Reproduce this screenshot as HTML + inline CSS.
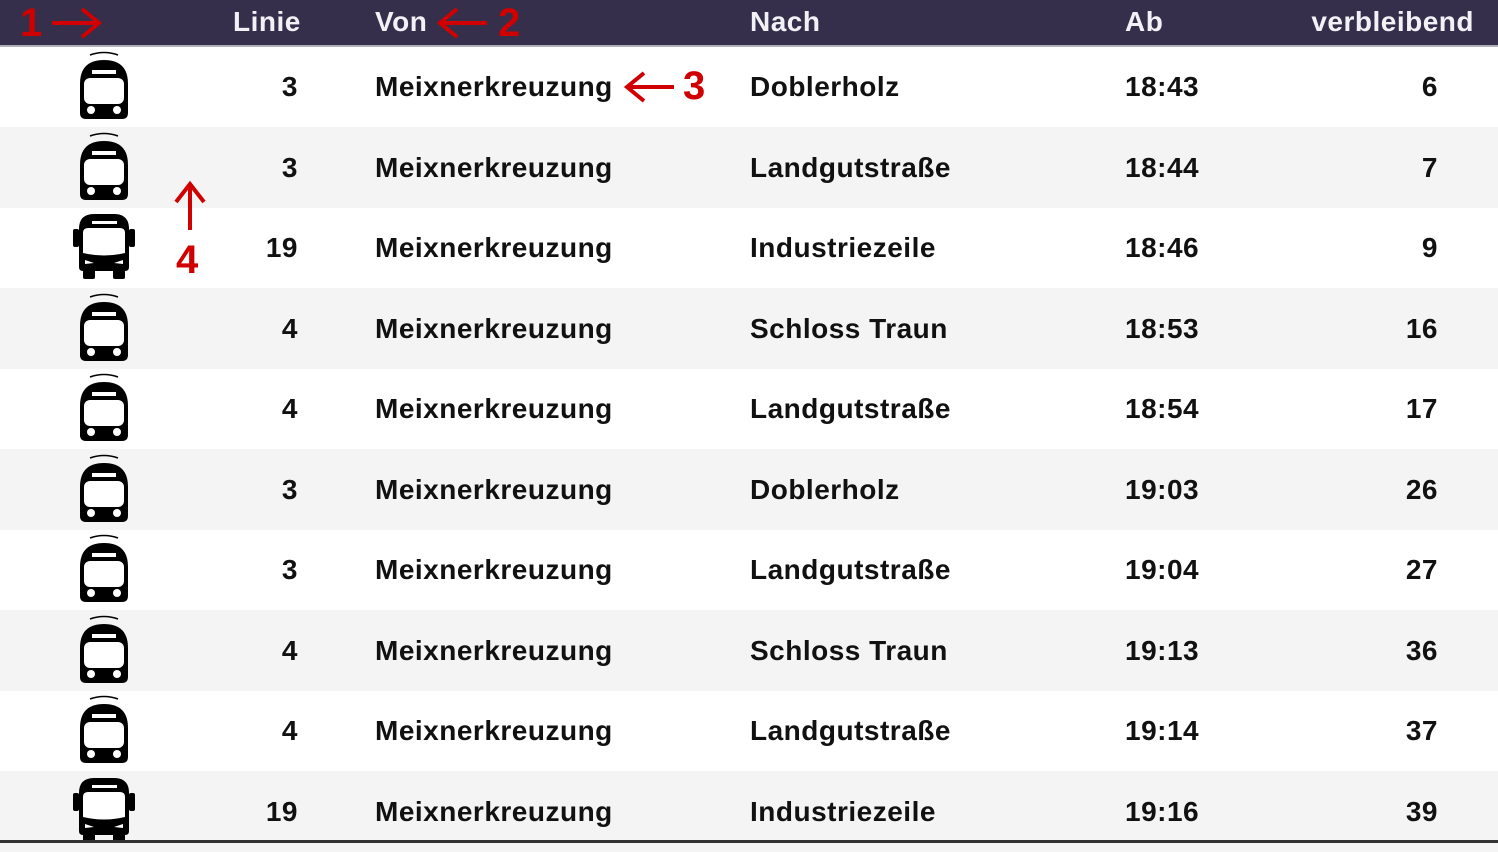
<!DOCTYPE html>
<html><head><meta charset="utf-8"><style>
body{margin:0;width:1498px;height:843px;overflow:hidden;background:#fff;font-family:"Liberation Sans",sans-serif;font-weight:bold;position:relative}
.hd{position:absolute;left:0;top:0;width:1498px;height:47px;background:#352f4b;border-bottom:2px solid #b0aeb8;box-sizing:border-box}
.h{position:absolute;top:5px;color:#f2f1f6;font-size:28px;letter-spacing:0.5px;line-height:34px}
.row{position:absolute;left:0;width:1498px;height:81px}
.e{background:#f4f4f4}
.t{position:absolute;font-size:28px;letter-spacing:0.5px;line-height:30px;color:#111;top:26px}
.n{right:1200px;text-align:right}
.v{left:375px}.na{left:750px}.ab{left:1125px}.rm{right:60px;text-align:right}
.ic{position:absolute;left:72px;top:0}
.ann{position:absolute;color:#d00000;font-size:40px;font-weight:bold;line-height:40px}
</style></head><body>
<svg width="0" height="0" style="position:absolute">
<defs>
<g id="tram"><path d="M18 9 Q32 4 46 9" stroke="#000" stroke-width="1.5" fill="none"/><path d="M8 38 Q8 14 32 14 Q56 14 56 38 L56 67 Q56 73 50 73 L14 73 Q8 73 8 67Z" fill="#000"/><rect x="20" y="24" width="24" height="4" fill="#fff"/><rect x="12" y="32" width="40" height="26" rx="6" fill="#fff"/><circle cx="19" cy="64" r="4" fill="#fff"/><circle cx="45" cy="64" r="4" fill="#fff"/></g>
<g id="bus"><rect x="1" y="22" width="6" height="18" rx="2" fill="#000"/><rect x="57" y="22" width="6" height="18" rx="2" fill="#000"/><path d="M7 22 Q7 7 22 7 L42 7 Q57 7 57 22 L57 60 Q57 64 53 64 L11 64 Q7 64 7 60Z" fill="#000"/><rect x="11" y="62" width="12" height="10" rx="2" fill="#000"/><rect x="41" y="62" width="12" height="10" rx="2" fill="#000"/><rect x="20" y="14" width="25" height="3" fill="#fff"/><path d="M11 26 Q11 21 16 21 L48 21 Q53 21 53 26 L53 46 Q32 51 11 46Z" fill="#fff"/><path d="M13 53 L22 56 L13 57Z" fill="#fff"/><path d="M51 53 L42 56 L51 57Z" fill="#fff"/></g>
</defs></svg>
<div class="hd"></div>
<div class="h" style="left:233px">Linie</div>
<div class="h" style="left:375px">Von</div>
<div class="h" style="left:750px">Nach</div>
<div class="h" style="left:1125px">Ab</div>
<div class="h" style="right:24px">verbleibend</div>

<div class="row" style="top:46px"><svg class="ic" width="64" height="81"><use href="#tram"/></svg><div class="t n">3</div><div class="t v">Meixnerkreuzung</div><div class="t na">Doblerholz</div><div class="t ab">18:43</div><div class="t rm">6</div></div>
<div class="row e" style="top:126.5px"><svg class="ic" width="64" height="81"><use href="#tram"/></svg><div class="t n">3</div><div class="t v">Meixnerkreuzung</div><div class="t na">Landgutstraße</div><div class="t ab">18:44</div><div class="t rm">7</div></div>
<div class="row" style="top:207px"><svg class="ic" width="64" height="81"><use href="#bus"/></svg><div class="t n">19</div><div class="t v">Meixnerkreuzung</div><div class="t na">Industriezeile</div><div class="t ab">18:46</div><div class="t rm">9</div></div>
<div class="row e" style="top:287.5px"><svg class="ic" width="64" height="81"><use href="#tram"/></svg><div class="t n">4</div><div class="t v">Meixnerkreuzung</div><div class="t na">Schloss Traun</div><div class="t ab">18:53</div><div class="t rm">16</div></div>
<div class="row" style="top:368px"><svg class="ic" width="64" height="81"><use href="#tram"/></svg><div class="t n">4</div><div class="t v">Meixnerkreuzung</div><div class="t na">Landgutstraße</div><div class="t ab">18:54</div><div class="t rm">17</div></div>
<div class="row e" style="top:448.5px"><svg class="ic" width="64" height="81"><use href="#tram"/></svg><div class="t n">3</div><div class="t v">Meixnerkreuzung</div><div class="t na">Doblerholz</div><div class="t ab">19:03</div><div class="t rm">26</div></div>
<div class="row" style="top:529px"><svg class="ic" width="64" height="81"><use href="#tram"/></svg><div class="t n">3</div><div class="t v">Meixnerkreuzung</div><div class="t na">Landgutstraße</div><div class="t ab">19:04</div><div class="t rm">27</div></div>
<div class="row e" style="top:609.5px"><svg class="ic" width="64" height="81"><use href="#tram"/></svg><div class="t n">4</div><div class="t v">Meixnerkreuzung</div><div class="t na">Schloss Traun</div><div class="t ab">19:13</div><div class="t rm">36</div></div>
<div class="row" style="top:690px"><svg class="ic" width="64" height="81"><use href="#tram"/></svg><div class="t n">4</div><div class="t v">Meixnerkreuzung</div><div class="t na">Landgutstraße</div><div class="t ab">19:14</div><div class="t rm">37</div></div>
<div class="row e" style="top:770.5px"><svg class="ic" width="64" height="81"><use href="#bus"/></svg><div class="t n">19</div><div class="t v">Meixnerkreuzung</div><div class="t na">Industriezeile</div><div class="t ab">19:16</div><div class="t rm">39</div></div>
<div style="position:absolute;left:0;top:840px;width:1498px;height:3px;background:#333"></div>

<div class="ann" style="left:20px;top:3px">1</div>
<svg style="position:absolute;left:50px;top:5px" width="55" height="36"><path d="M2 18 H48 M32 4 L49 18 L32 32" stroke="#d00000" stroke-width="4" fill="none"/></svg>
<svg style="position:absolute;left:435px;top:5px" width="55" height="36"><path d="M52 18 H6 M22 4 L5 18 L22 32" stroke="#d00000" stroke-width="4" fill="none"/></svg>
<div class="ann" style="left:498px;top:3px">2</div>
<svg style="position:absolute;left:622px;top:69px" width="55" height="36"><path d="M52 18 H6 M22 4 L5 18 L22 32" stroke="#d00000" stroke-width="4" fill="none"/></svg>
<div class="ann" style="left:683px;top:66px">3</div>
<svg style="position:absolute;left:170px;top:180px" width="40" height="52"><path d="M20 50 V5 M6 22 L20 4 L34 22" stroke="#d00000" stroke-width="4" fill="none"/></svg>
<div class="ann" style="left:176px;top:240px">4</div>
</body></html>
